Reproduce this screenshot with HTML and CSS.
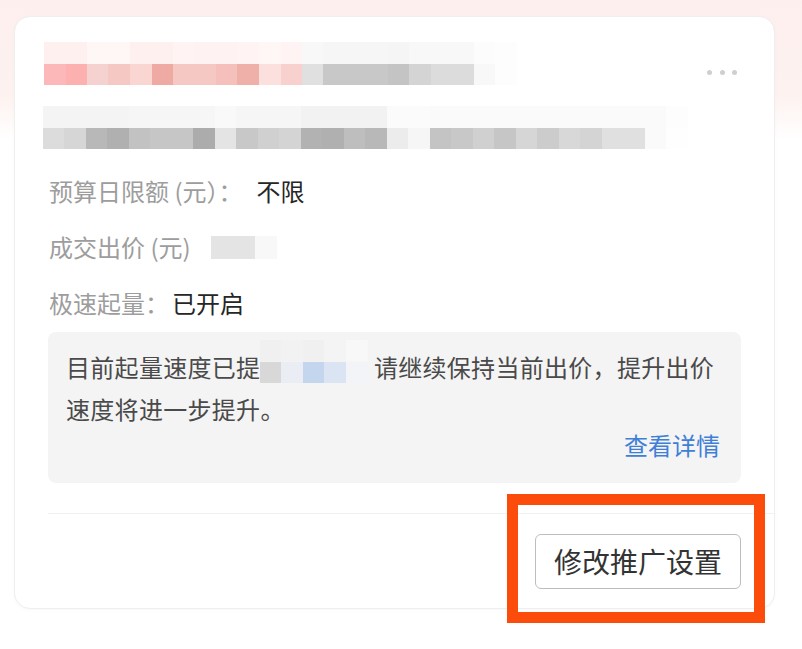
FILE: index.html
```html
<!DOCTYPE html>
<html lang="zh-CN">
<head>
<meta charset="utf-8">
<title>推广计划</title>
<link rel="stylesheet" href="styles.css">
</head>
<body>
<div class="page">
  <div class="card">
    <div class="head">
      <div class="mosaic title-mosaic">
        <div class="mrow t1"></div>
        <div class="mrow t2"></div>
      </div>
      <div class="more"><span></span><span></span><span></span></div>
    </div>
    <div class="mosaic sub-mosaic">
      <div class="mrow s1"></div>
      <div class="mrow s2"></div>
    </div>
    <div class="fields">
      <div class="field"><span class="label">预算日限额 (元）：</span><span class="value value-wide">不限</span></div>
      <div class="field"><span class="label">成交出价 (元)</span><span class="price-mosaic"></span></div>
      <div class="field"><span class="label">极速起量：</span><span class="value">已开启</span></div>
    </div>
    <div class="tip">
      <p class="tip-text">目前起量速度已提<span class="tip-mosaic"></span>请继续保持当前出价，提升出价<br>速度将进一步提升。</p>
      <div class="tip-link"><a class="link">查看详情</a></div>
    </div>
    <div class="divider"></div>
    <div class="actions">
      <button class="btn">修改推广设置</button>
    </div>
    <div class="highlight"></div>
  </div>
</div>
</body>
</html>
```

FILE: styles.css
```css
* { box-sizing: border-box; }
html, body { margin: 0; padding: 0; }
body {
  width: 802px;
  height: 649px;
  overflow: hidden;
  background: linear-gradient(180deg, #fdefed 0px, #fdf2f0 95px, #ffffff 140px);
  font-family: "Noto Sans CJK SC", "Noto Sans", sans-serif;
}
.page {
  padding: 16px 0 0 14px;
}
.card {
  position: relative;
  width: 761px;
  height: 593px;
  background: #fff;
  border: 1px solid #efefef;
  border-radius: 16px;
  box-shadow: 0 1px 3px rgba(0,0,0,0.03);
  padding: 25px 33px 17px 33px;
  display: flex;
  flex-direction: column;
}
.head {
  display: flex;
  justify-content: space-between;
  align-items: flex-start;
}
.mosaic { display: flex; flex-direction: column; margin-left: -5px; }
.mrow { height: 21.5px; }
.title-mosaic .mrow { width: 473px; margin-left: 0.7px; }
.t1 {
  background: linear-gradient(90deg,
    #fff0f0 0 43px, #fff6f6 43px 86px, #fff0f0 86px 129px, #fff3f3 129px 150.5px,
    #fff2f2 150.5px 193.5px, #fff3f3 193.5px 215px, #fff6f6 215px 236.5px, #fff3f3 236.5px 258px,
    #f8f8f8 258px 279.5px, #f6f6f6 279.5px 344px, #f5f5f5 344px 365.5px, #f8f8f8 365.5px 430px,
    #fcfcfc 430px 451.5px, #fdfdfd 451.5px 473px);
}
.t2 {
  background: linear-gradient(90deg,
    #fcb8b8 0 21.5px, #fcb0b0 21.5px 43px, #f5d2d0 43px 64.5px, #f5c8c4 64.5px 86px,
    #fad6d2 86px 107.5px, #f0aaa4 107.5px 129px, #f5c8c4 129px 172px, #f5c0bc 172px 193.5px,
    #f0b0aa 193.5px 215px, #fbe0de 215px 236.5px, #f8d0ce 236.5px 258px, #e0e0e0 258px 279.5px,
    #c8c8c8 279.5px 344px, #c4c4c4 344px 365.5px, #d4d4d4 365.5px 387px, #dcdcdc 387px 430px,
    #f8f8f8 430px 451.5px, #fdfdfd 451.5px 473px);
}
.more {
  display: flex;
  gap: 7.5px;
  margin-top: 28px;
  margin-right: 4px;
}
.more span {
  width: 5px; height: 5px; border-radius: 50%;
  background: #cfcfcf;
}
.sub-mosaic { margin-top: 21px; }
.sub-mosaic .mrow { width: 645px; }
.s1 {
  background: linear-gradient(90deg,
    #f4f4f4 0 86px, #f6f6f6 86px 172px, #f9f9f9 172px 193.5px, #f6f6f6 193.5px 258px,
    #f2f2f2 258px 344px, #fbfbfb 344px 387px, #fafafa 387px 623.5px, #fdfdfd 623.5px 645px);
}
.s2 {
  background: linear-gradient(90deg,
    #dcdcdc 0 21.5px, #d6d6d6 21.5px 43px, #b8b8b8 43px 64.5px, #b0b0b0 64.5px 86px,
    #c2c2c2 86px 107.5px, #c6c6c6 107.5px 150.5px, #acacac 150.5px 172px, #e4e4e4 172px 193.5px,
    #c8c8c8 193.5px 215px, #d0d0d0 215px 236.5px, #d4d4d4 236.5px 258px, #b2b2b2 258px 279.5px,
    #b0b0b0 279.5px 301px, #bebebe 301px 322.5px, #b8b8b8 322.5px 344px, #ececec 344px 365.5px,
    #f6f6f6 365.5px 387px, #c4c4c4 387px 408.5px, #c8c8c8 408.5px 430px, #d0d0d0 430px 451.5px,
    #c6c6c6 451.5px 473px, #d6d6d6 473px 494.5px, #cccccc 494.5px 516px, #d8d8d8 516px 537.5px,
    #d4d4d4 537.5px 559px, #e0e0e0 559px 602px, #fafafa 602px 623.5px, #fefefe 623.5px 645px);
}
.fields { margin-top: 14px; padding-left: 1px; }
.field {
  height: 56px;
  display: flex;
  align-items: center;
  font-size: 24px;
  line-height: 32px;
}
.label { color: #9d9d9d; }
.value { color: #262626; margin-left: 3px; }
.value-wide { margin-left: 14px; }
.price-mosaic {
  display: inline-block;
  width: 66px;
  height: 23px;
  margin-left: 20px;
  background: linear-gradient(90deg, #e4e4e4 0 44px, #f8f8f8 44px 66px);
}
.tip {
  margin-top: 1px;
  background: #f4f4f4;
  border-radius: 8px;
  padding: 14px 21px 23px 18px;
  color: #4a4a4a;
  font-size: 24px;
}
.tip-text {
  margin: 0;
  line-height: 42px;
  white-space: nowrap;
  letter-spacing: 0.3px;
}
.tip-mosaic {
  display: inline-block;
  width: 107.5px;
  height: 43px;
  vertical-align: top;
  margin: -6px 6px -1px 0;
  background:
    linear-gradient(90deg, #f0f0f0 0 21.5px, #f2f2f2 21.5px 43px, #f0f0f0 43px 64.5px, #f4f4f4 64.5px 86px, #f8f8f8 86px 107.5px) top / 100% 21.5px no-repeat,
    linear-gradient(90deg, #d8d8d8 0 21.5px, #eaeef4 21.5px 43px, #c4d6ee 43px 64.5px, #dae4f2 64.5px 86px, #f2f4f8 86px 107.5px) bottom / 100% 21.5px no-repeat;
}
.tip-link {
  text-align: right;
  line-height: 30px;
}
.link { color: #3f7fd6; }
.divider {
  height: 1px;
  background: #f1f1f1;
  margin: 30px -33px 0 0;
}
.actions {
  display: flex;
  justify-content: flex-end;
  margin-top: 20px;
}
.btn {
  font-family: "Noto Sans CJK SC", "Noto Sans", sans-serif;
  font-size: 28px;
  color: #333;
  background: #fff;
  border: 1px solid #bdbdbd;
  border-radius: 6px;
  height: 55px;
  padding: 0 18px;
  line-height: 53px;
}
.highlight {
  position: absolute;
  left: 492px;
  top: 477px;
  width: 258px;
  height: 129px;
  border: 11px solid #fb4c0c;
}
```
